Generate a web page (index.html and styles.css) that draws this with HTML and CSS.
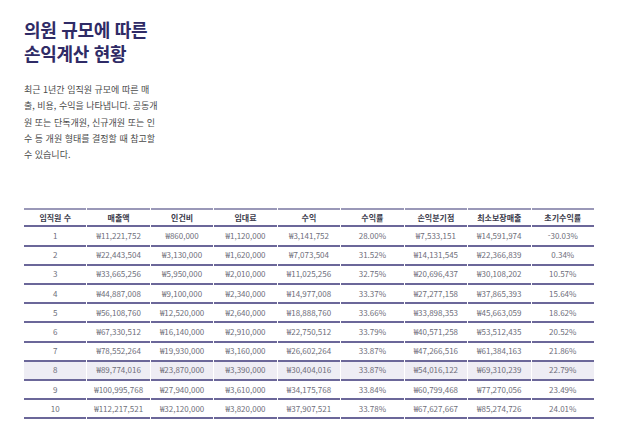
FILE: index.html
```html
<!DOCTYPE html>
<html lang="ko">
<head>
<meta charset="utf-8">
<link rel="stylesheet" href="styles.css">
</head>
<body>
<main class="page">
  <h1 class="title">의원 규모에 따른<br>손익계산 현황</h1>
  <p class="desc">최근 1년간 임직원 규모에 따른 매<br>출, 비용, 수익을 나타냅니다. 공동개<br>원 또는 단독개원, 신규개원 또는 인<br>수 등 개원 형태를 결정할 때 참고할<br>수 있습니다.</p>
  <table class="data">
    <thead>
      <tr><th>임직원 수</th><th>매출액</th><th>인건비</th><th>임대료</th><th>수익</th><th>수익률</th><th>손익분기점</th><th>최소보장매출</th><th>초기수익률</th></tr>
    </thead>
    <tbody>
      <tr><td>1</td><td>₩11,221,752</td><td>₩860,000</td><td>₩1,120,000</td><td>₩3,141,752</td><td>28.00%</td><td>₩7,533,151</td><td>₩14,591,974</td><td>-30.03%</td></tr>
      <tr><td>2</td><td>₩22,443,504</td><td>₩3,130,000</td><td>₩1,620,000</td><td>₩7,073,504</td><td>31.52%</td><td>₩14,131,545</td><td>₩22,366,839</td><td>0.34%</td></tr>
      <tr><td>3</td><td>₩33,665,256</td><td>₩5,950,000</td><td>₩2,010,000</td><td>₩11,025,256</td><td>32.75%</td><td>₩20,696,437</td><td>₩30,108,202</td><td>10.57%</td></tr>
      <tr><td>4</td><td>₩44,887,008</td><td>₩9,100,000</td><td>₩2,340,000</td><td>₩14,977,008</td><td>33.37%</td><td>₩27,277,158</td><td>₩37,865,393</td><td>15.64%</td></tr>
      <tr><td>5</td><td>₩56,108,760</td><td>₩12,520,000</td><td>₩2,640,000</td><td>₩18,888,760</td><td>33.66%</td><td>₩33,898,353</td><td>₩45,663,059</td><td>18.62%</td></tr>
      <tr><td>6</td><td>₩67,330,512</td><td>₩16,140,000</td><td>₩2,910,000</td><td>₩22,750,512</td><td>33.79%</td><td>₩40,571,258</td><td>₩53,512,435</td><td>20.52%</td></tr>
      <tr><td>7</td><td>₩78,552,264</td><td>₩19,930,000</td><td>₩3,160,000</td><td>₩26,602,264</td><td>33.87%</td><td>₩47,266,516</td><td>₩61,384,163</td><td>21.86%</td></tr>
      <tr class="hl"><td>8</td><td>₩89,774,016</td><td>₩23,870,000</td><td>₩3,390,000</td><td>₩30,404,016</td><td>33.87%</td><td>₩54,016,122</td><td>₩69,310,239</td><td>22.79%</td></tr>
      <tr><td>9</td><td>₩100,995,768</td><td>₩27,940,000</td><td>₩3,610,000</td><td>₩34,175,768</td><td>33.84%</td><td>₩60,799,468</td><td>₩77,270,056</td><td>23.49%</td></tr>
      <tr><td>10</td><td>₩112,217,521</td><td>₩32,120,000</td><td>₩3,820,000</td><td>₩37,907,521</td><td>33.78%</td><td>₩67,627,667</td><td>₩85,274,726</td><td>24.01%</td></tr>
    </tbody>
  </table>
</main>
</body>
</html>
```
FILE: styles.css
```css
html, body {
  margin: 0;
  padding: 0;
  background: #ffffff;
}
body {
  font-family: "Noto Sans CJK KR", "Noto Sans", sans-serif;
}
.page {
  padding: 17px 23px 0 24px;
}
.title {
  margin: 0;
  font-size: 18px;
  line-height: 24px;
  font-weight: 700;
  color: #2f2b66;
  letter-spacing: -0.3px;
}
.desc {
  margin: 17px 0 0 0;
  font-size: 9px;
  line-height: 16.3px;
  color: #4a4a4a;
}
.data {
  margin-top: 45px;
  width: 572px;
  table-layout: fixed;
  border-collapse: separate;
  border-spacing: 1px 0;
  margin-left: -1px;
  font-size: 8px;
  line-height: 1;
}
.data th, .data td {
  text-align: center;
  padding: 0;
  height: 17.2px;
  border-bottom: 2px solid #6b6799;
}
.data th {
  border-top: 2px solid #9a98b8;
  font-weight: 700;
  color: #3a3a4a;
  height: 15px;
}
.data td {
  color: #6e6e7a;
}
.data tr.hl td {
  background: #eeedf4;
}
```
